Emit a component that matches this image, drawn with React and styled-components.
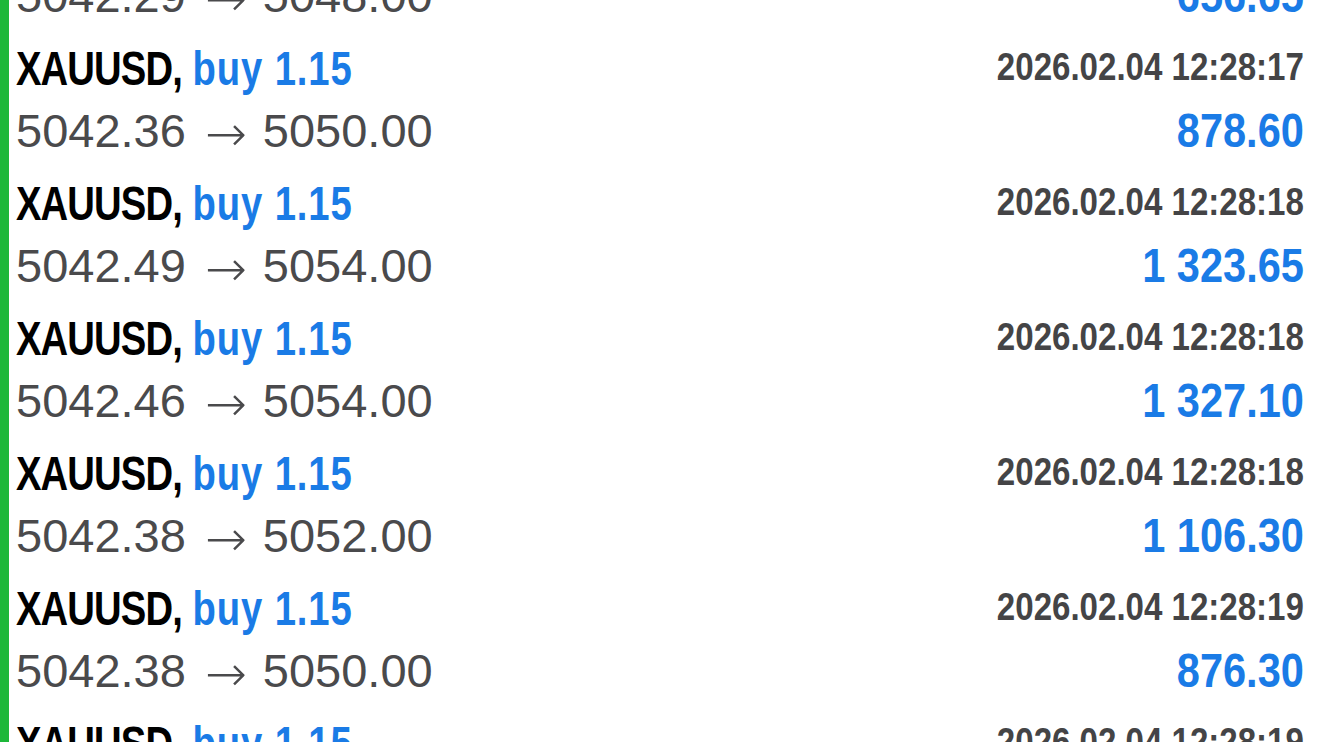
import styled, { createGlobalStyle } from "styled-components";

const GlobalStyle = createGlobalStyle`
  html, body {
    margin: 0;
    padding: 0;
    background: #ffffff;
    overflow: hidden;
  }
`;

const trades = [
  { symbol: "XAUUSD", side: "buy", volume: "1.15", time: "2026.02.04 12:28:17", open: "5042.29", close: "5048.00", profit: "656.65" },
  { symbol: "XAUUSD", side: "buy", volume: "1.15", time: "2026.02.04 12:28:17", open: "5042.36", close: "5050.00", profit: "878.60" },
  { symbol: "XAUUSD", side: "buy", volume: "1.15", time: "2026.02.04 12:28:18", open: "5042.49", close: "5054.00", profit: "1 323.65" },
  { symbol: "XAUUSD", side: "buy", volume: "1.15", time: "2026.02.04 12:28:18", open: "5042.46", close: "5054.00", profit: "1 327.10" },
  { symbol: "XAUUSD", side: "buy", volume: "1.15", time: "2026.02.04 12:28:18", open: "5042.38", close: "5052.00", profit: "1 106.30" },
  { symbol: "XAUUSD", side: "buy", volume: "1.15", time: "2026.02.04 12:28:19", open: "5042.38", close: "5050.00", profit: "876.30" },
  { symbol: "XAUUSD", side: "buy", volume: "1.15", time: "2026.02.04 12:28:19", open: "5042.40", close: "5050.00", profit: "874.00" },
];

const Screen = styled.div`
  height: 742px;
  overflow: hidden;
  display: flex;
  background: #ffffff;
`;

const Marker = styled.div`
  width: 9px;
  flex-shrink: 0;
  background: #1db83a;
`;

const List = styled.div`
  flex: 1;
  margin-top: -97px;
  padding: 0 16px 0 7px;
`;

const Row = styled.div`
  padding-bottom: 5px;
`;

const Line = styled.div`
  display: flex;
  align-items: center;
  justify-content: space-between;
  height: ${(props) => props.h}px;
  white-space: nowrap;
`;

// narrow bold face: squeeze Liberation Sans Bold horizontally
const Condensed = styled.span`
  display: inline-block;
  font-family: "Liberation Sans", Arial, sans-serif;
  font-weight: 700;
  transform: scaleX(${(props) => props.squeeze});
  transform-origin: ${(props) => (props.right ? "right" : "left")} center;
`;

const Symbol = styled(Condensed)`
  font-size: 47.5px;
  color: #000000;
`;

const Name = styled.span`
  letter-spacing: -1.1px;
`;

const Side = styled.span`
  color: #1a7be6;
  letter-spacing: 1.1px;
`;

const Time = styled(Condensed)`
  font-size: 38px;
  color: #444446;
  margin-top: -2px;
`;

const Prices = styled.span`
  font-family: "Liberation Sans", Arial, sans-serif;
  font-size: 47px;
  color: #4a4a4c;
  margin-top: -6px;
`;

const Arrow = styled.span`
  font-family: "DejaVu Sans", sans-serif;
  font-weight: 200;
  font-size: 50px;
  margin: 0 16px 0 19px;
  position: relative;
  top: 4px;
`;

const Profit = styled(Condensed)`
  font-size: 48px;
  color: #1a7be6;
  margin-top: -6px;
`;

const Trade = ({ trade }) => (
  <Row>
    <Line h={60}>
      <Symbol squeeze={0.805}>
        <Name>{trade.symbol},</Name> <Side>{trade.side} {trade.volume}</Side>
      </Symbol>
      <Time squeeze={0.87} right>
        {trade.time}
      </Time>
    </Line>
    <Line h={70}>
      <Prices>
        {trade.open}
        <Arrow>→</Arrow>
        {trade.close}
      </Prices>
      <Profit squeeze={0.865} right>
        {trade.profit}
      </Profit>
    </Line>
  </Row>
);

const App = () => {
  return (
    <>
      <GlobalStyle />
      <Screen>
        <Marker />
        <List>
          {trades.map((trade, i) => (
            <Trade key={i} trade={trade} />
          ))}
        </List>
      </Screen>
    </>
  );
};

export default App;
